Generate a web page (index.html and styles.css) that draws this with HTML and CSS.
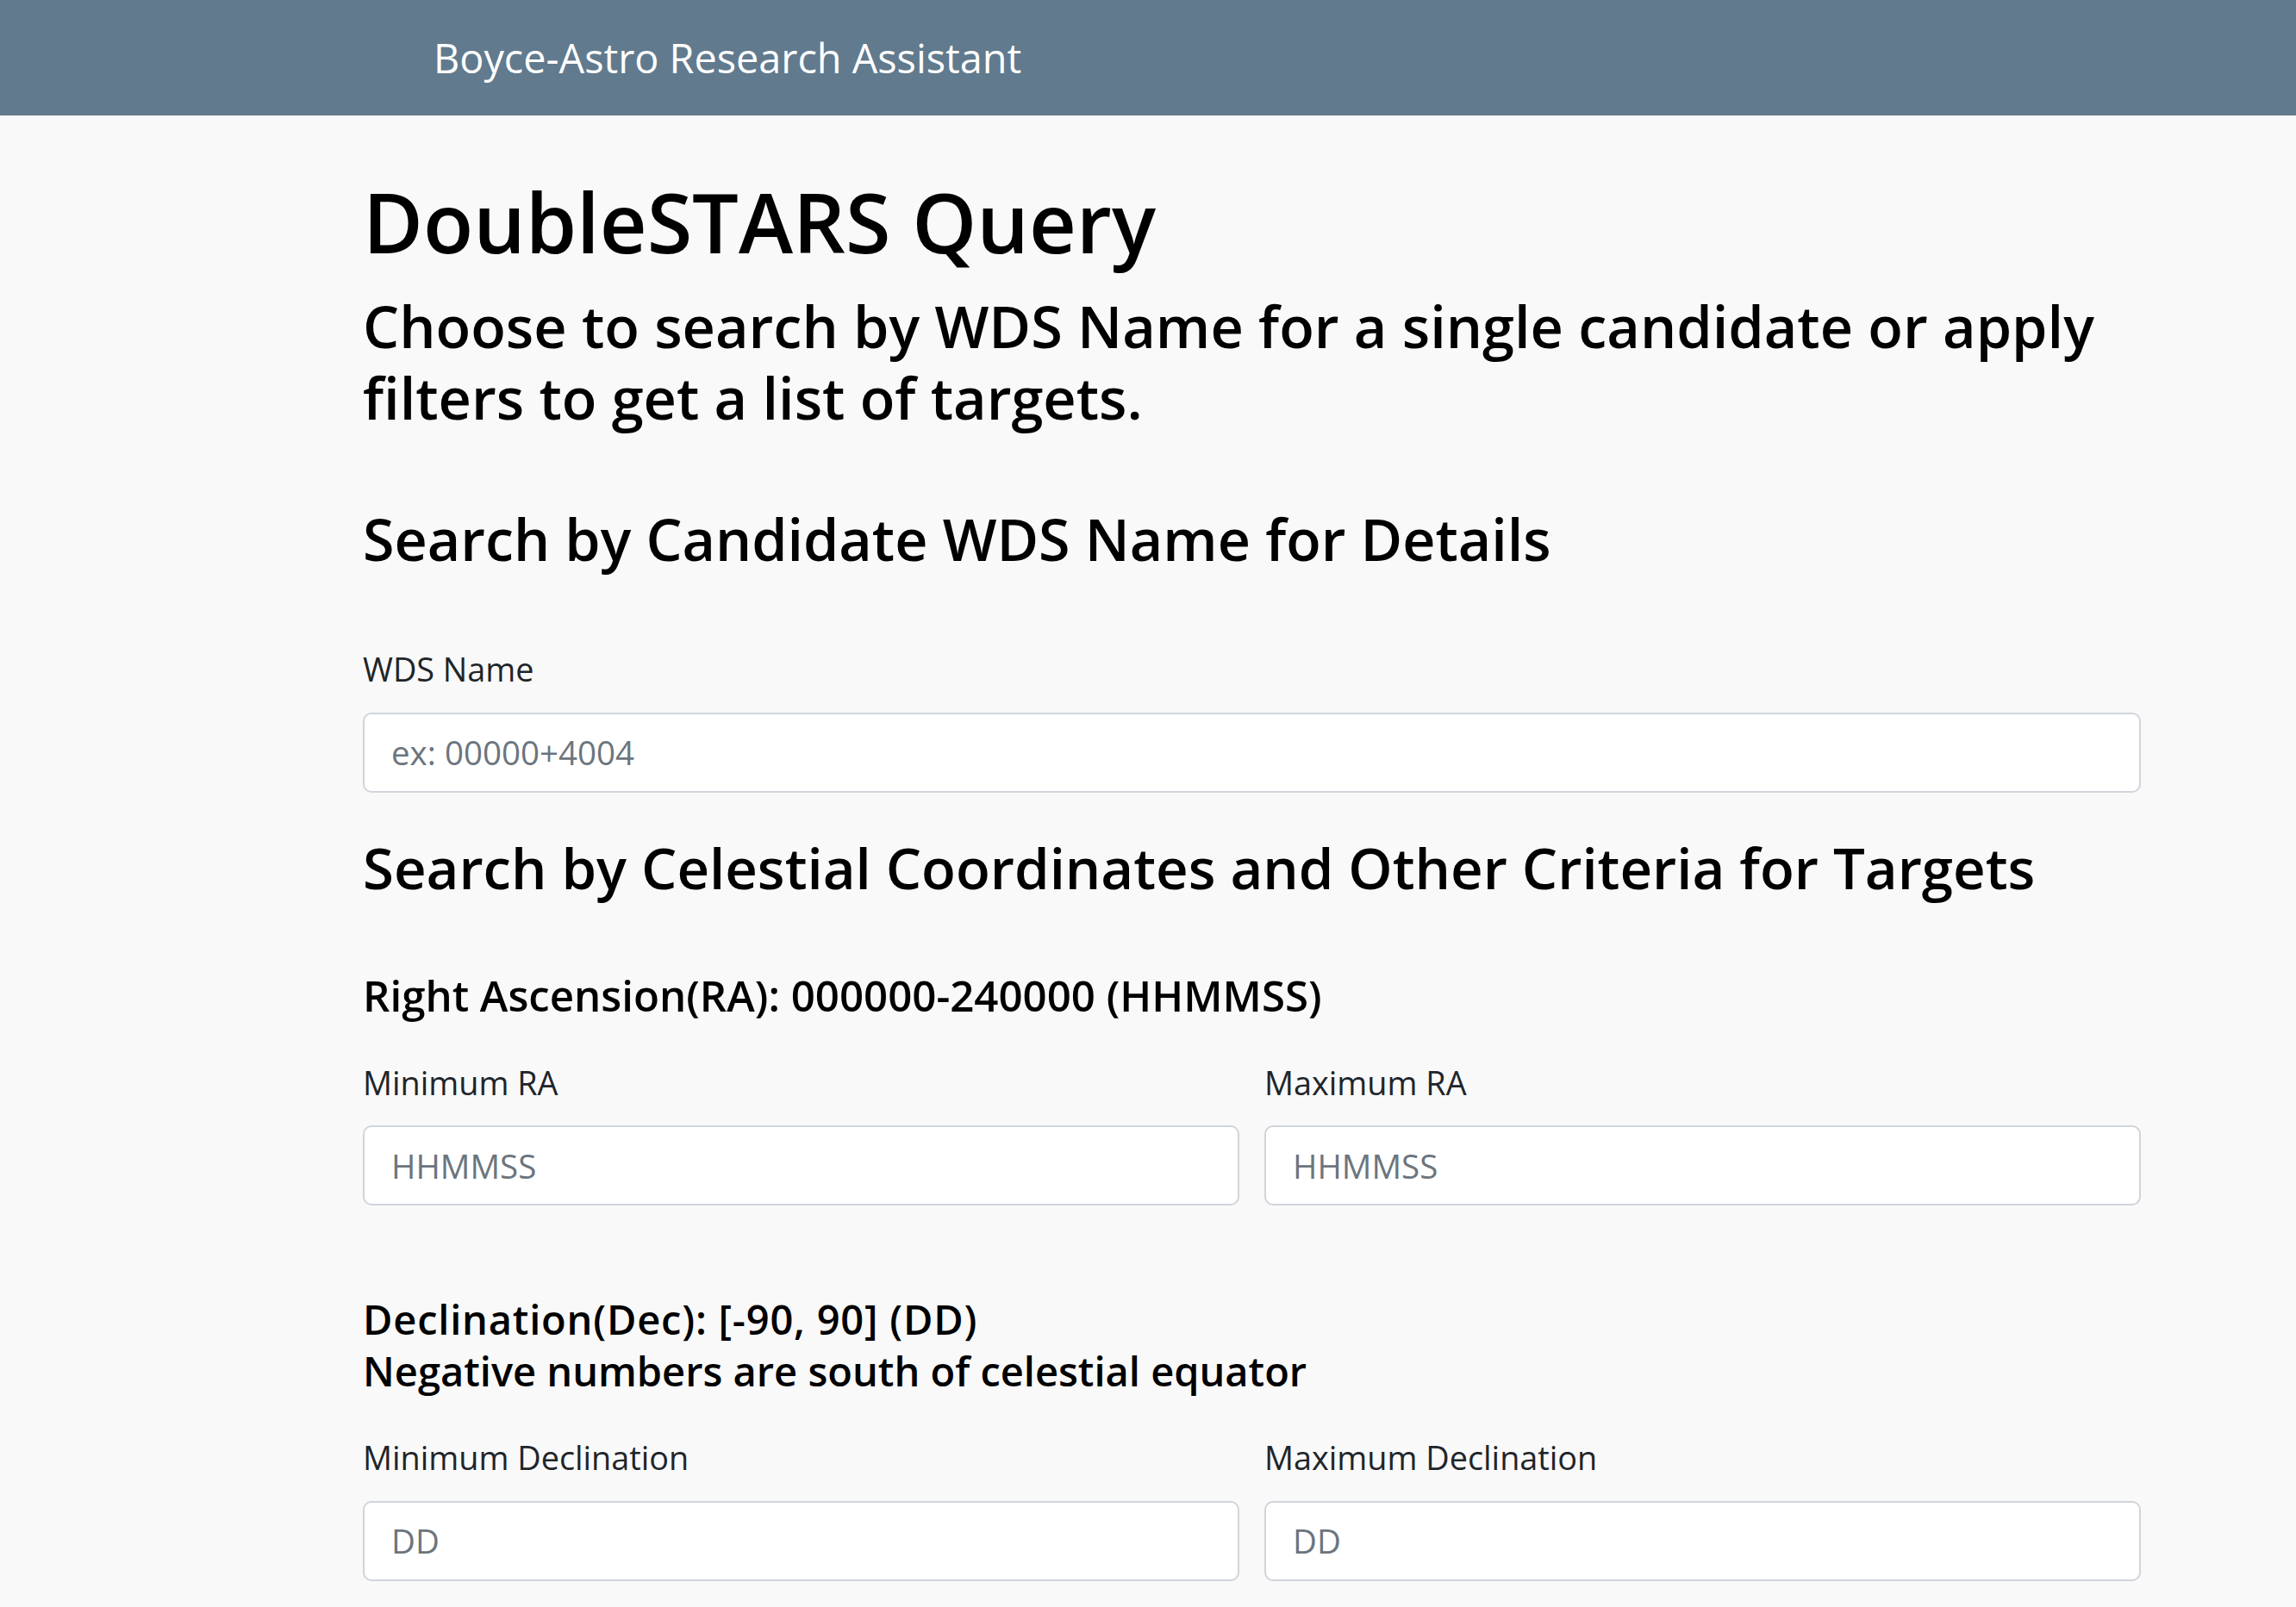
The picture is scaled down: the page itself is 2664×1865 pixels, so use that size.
FILE: index.html
```html
<!DOCTYPE html>
<html lang="en">
<head>
<meta charset="utf-8">
<title>DoubleSTARS Query</title>
<link rel="stylesheet" href="styles.css">
</head>
<body>
<header class="topbar">
  <span class="brand">Boyce-Astro Research Assistant</span>
</header>
<main class="page">
  <h1 class="title">DoubleSTARS Query</h1>
  <h3 class="lead">Choose to search by WDS Name for a single candidate or apply filters to get a list of targets.</h3>

  <h3 class="section section-first">Search by Candidate WDS Name for Details</h3>
  <div class="field field-single">
    <label class="label" for="wds">WDS Name</label>
    <input class="input" id="wds" type="text" placeholder="ex: 00000+4004">
  </div>

  <h3 class="section section-second">Search by Celestial Coordinates and Other Criteria for Targets</h3>

  <h5 class="group group-ra">Right Ascension(RA): 000000-240000 (HHMMSS)</h5>
  <div class="row row-ra">
    <div class="field">
      <label class="label" for="minra">Minimum RA</label>
      <input class="input" id="minra" type="text" placeholder="HHMMSS">
    </div>
    <div class="field">
      <label class="label" for="maxra">Maximum RA</label>
      <input class="input" id="maxra" type="text" placeholder="HHMMSS">
    </div>
  </div>

  <h5 class="group group-dec"><span class="dec-range">Declination(Dec): [-90, 90] (DD)</span><br>Negative numbers are south of celestial equator</h5>
  <div class="row row-dec">
    <div class="field">
      <label class="label" for="mindec">Minimum Declination</label>
      <input class="input" id="mindec" type="text" placeholder="DD">
    </div>
    <div class="field">
      <label class="label" for="maxdec">Maximum Declination</label>
      <input class="input" id="maxdec" type="text" placeholder="DD">
    </div>
  </div>
</main>
</body>
</html>
```
FILE: styles.css
```css
html, body {
  margin: 0;
  padding: 0;
}
body {
  background: #f9f9f9;
  color: #000;
  font-family: "Open Sans", "Noto Sans", sans-serif;
}
.topbar {
  height: 134px;
  background: #617a8e;
  display: flex;
  align-items: center;
  padding-left: 503px;
}
.brand {
  color: #fff;
  font-size: 46.8px;
  line-height: 1.2;
  font-weight: 400;
}
.page {
  margin-left: 421px;
  width: 2063px;
  padding-bottom: 40px;
}
.title {
  margin: 66px 0 0;
  font-size: 95.4px;
  line-height: 114px;
  font-weight: 600;
}
.lead {
  margin: 23px 0 0;
  font-size: 66.6px;
  line-height: 83px;
  font-weight: 600;
}
.section {
  margin: 0;
  line-height: 83px;
  font-weight: 600;
}
.section-first {
  margin-top: 81px;
  font-size: 66.4px;
}
.section-second {
  margin-top: 45px;
  font-size: 65.3px;
}
.field {
  display: flex;
  flex-direction: column;
}
.label {
  font-size: 37.8px;
  line-height: 52px;
  color: #212529;
  margin-bottom: 23.5px;
}
.field-single .label { margin-top: 84px; }
.row-ra .label { margin-top: 50px; }
.row-dec .label { margin-top: 45px; }
.input {
  box-sizing: border-box;
  height: 93px;
  width: 100%;
  margin: 0;
  padding: 0 31px;
  font-family: "Open Sans", "Noto Sans", sans-serif;
  font-size: 38.5px;
  color: #212529;
  background: #fff;
  border: 2px solid #d0d5db;
  border-radius: 10px;
  outline: none;
}
.input::placeholder { color: #6c757d; }
.group {
  margin: 0;
  font-weight: 600;
}
.group-ra {
  margin-top: 80px;
  font-size: 49.2px;
  line-height: 53px;
}
.group-dec {
  margin-top: 102px;
  font-size: 47px;
  line-height: 60px;
}
.dec-range {
  letter-spacing: 0.8px;
}
.row {
  display: grid;
  grid-template-columns: 1fr 1fr;
  column-gap: 29px;
}
```
